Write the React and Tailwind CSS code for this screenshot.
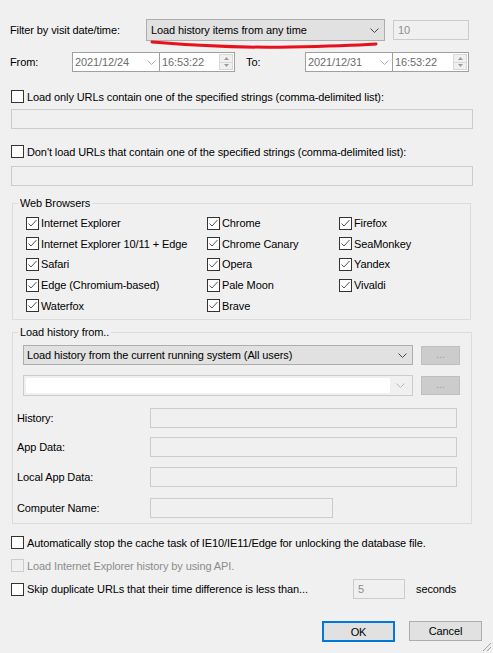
import React from "react";

const font = { fontFamily: '"Liberation Sans", Arial, sans-serif' };

function Check({ checked, disabled }) {
  return (
    <span
      className={
        "flex h-[13px] w-[13px] shrink-0 items-center justify-center border " +
        (disabled ? "border-[#cccccc] bg-[#f0f0f0]" : "border-[#333333] bg-white")
      }
    >
      {checked && (
        <svg width="11" height="11" viewBox="0 0 11 11">
          <polyline points="1.5,5.5 4,8 9.5,2" fill="none" stroke="#555" strokeWidth="1" />
        </svg>
      )}
    </span>
  );
}

function Chevron({ color = "#444" }) {
  return (
    <svg width="9" height="5" viewBox="0 0 9 5">
      <polyline points="0.5,0.5 4.5,4.5 8.5,0.5" fill="none" stroke={color} strokeWidth="1" />
    </svg>
  );
}

function DateBox({ date, w1, w2 }) {
  return (
    <div className="flex h-[20px]">
      <div
        className="flex items-center justify-between border border-[#a0a0a0] bg-white pl-[2px] pr-[3px] text-[#6d6d6d]"
        style={{ width: w1 }}
      >
        <span>{date}</span>
        <Chevron color="#b0b0b0" />
      </div>
      <div
        className="flex items-center justify-between border border-l-0 border-[#a0a0a0] bg-white pl-[2px] pr-[1px] text-[#6d6d6d]"
        style={{ width: w2 }}
      >
        <span>16:53:22</span>
        <div className="flex h-[16px] w-[14px] flex-col border border-[#d9d9d9] bg-[#f0f0f0]">
          <div className="flex flex-1 items-center justify-center border-b border-[#d9d9d9]">
            <svg width="5" height="3" viewBox="0 0 5 3"><polygon points="0,3 2.5,0 5,3" fill="#9a9a9a" /></svg>
          </div>
          <div className="flex flex-1 items-center justify-center">
            <svg width="5" height="3" viewBox="0 0 5 3"><polygon points="0,0 2.5,3 5,0" fill="#9a9a9a" /></svg>
          </div>
        </div>
      </div>
    </div>
  );
}

function Field({ className = "" }) {
  return <div className={"border border-[#cccccc] bg-[#f0f0f0] " + className} />;
}

function DotsButton() {
  return (
    <div className="flex h-[19px] w-[39px] items-center justify-center border border-[#bfbfbf] bg-[#cccccc] pb-[3px] text-[#a0a0a0]">
      ...
    </div>
  );
}

const browsers = [
  ["Internet Explorer", "Chrome", "Firefox"],
  ["Internet Explorer 10/11 + Edge", "Chrome Canary", "SeaMonkey"],
  ["Safari", "Opera", "Yandex"],
  ["Edge (Chromium-based)", "Pale Moon", "Vivaldi"],
  ["Waterfox", "Brave", null],
];

const paths = [
  ["History:", "w-[307px]", "mt-[12px]"],
  ["App Data:", "w-[307px]", "mt-[9px]"],
  ["Local App Data:", "w-[307px]", "mt-[10px]"],
  ["Computer Name:", "w-[183px]", "mt-[11px]"],
];

export default function App() {
  return (
    <div
      className="relative h-[653px] w-[493px] overflow-hidden bg-[#f0f0f0] text-[11px] leading-[14px] tracking-[-0.1px] text-black"
      style={font}
    >
      {/* time filter */}
      <div className="flex h-[22px] items-center mt-[19px]">
        <span className="w-[146px] pl-[10px]">Filter by visit date/time:</span>
        <div className="flex h-[22px] w-[239px] items-center justify-between border border-[#adadad] bg-[#e1e1e1] pl-[4px] pr-[5px]">
          <span>Load history items from any time</span>
          <Chevron />
        </div>
        <div className="ml-[8px] flex h-[20px] w-[76px] items-center border border-[#cccccc] bg-[#f0f0f0] pl-[4px] text-[#8c8c8c]">
          10
        </div>
      </div>
      <svg className="pointer-events-none absolute left-0 top-0" width="493" height="60">
        <path
          d="M152 42 C 200 46, 240 48, 290 47 S 360 45, 376 44"
          fill="none"
          stroke="#e8101c"
          strokeWidth="3"
          strokeLinecap="round"
        />
      </svg>

      <div className="mt-[11px] flex h-[20px] items-center">
        <span className="w-[72px] pl-[10px]">From:</span>
        <DateBox date="2021/12/24" w1={88} w2={75} />
        <span className="ml-[11px] w-[59px]">To:</span>
        <DateBox date="2021/12/31" w1={88} w2={76} />
      </div>

      {/* url filters */}
      <div className="mt-[18px] flex h-[13px] items-center gap-[3px] pl-[11px]">
        <Check />
        <span>Load only URLs contain one of the specified strings (comma-delimited list):</span>
      </div>
      <div className="mt-[6px] pl-[11px]">
        <Field className="h-[20px] w-[462px]" />
      </div>
      <div className="mt-[16px] flex h-[13px] items-center gap-[3px] pl-[11px]">
        <Check />
        <span>Don't load URLs that contain one of the specified strings (comma-delimited list):</span>
      </div>
      <div className="mt-[8px] pl-[11px]">
        <Field className="h-[20px] w-[462px]" />
      </div>

      {/* browsers */}
      <fieldset className="ml-[12px] mt-[10px] h-[124px] w-[459px] border border-[#dcdcdc]">
        <legend className="ml-[5px] px-[2px]">Web Browsers</legend>
        <div className="pl-[13px] pt-[3px]">
          {browsers.map((row, i) => (
            <div key={i} className="flex h-[20.6px] items-center">
              {row.map((name, j) => (
                <div
                  key={j}
                  className={"flex items-center gap-[2px] " + (j === 0 ? "w-[181px]" : j === 1 ? "w-[132px]" : "")}
                >
                  {name && (
                    <>
                      <Check checked />
                      <span>{name}</span>
                    </>
                  )}
                </div>
              ))}
            </div>
          ))}
        </div>
      </fieldset>

      {/* source */}
      <fieldset className="ml-[12px] mt-[5px] h-[199px] w-[460px] border border-[#dcdcdc]">
        <legend className="ml-[5px] px-[2px]">Load history from..</legend>
        <div className="pl-[4px] pt-[6px]">
          <div className="flex items-center pl-[6px]">
            <div className="flex h-[20px] w-[390px] items-center justify-between border border-[#adadad] bg-[#e1e1e1] pl-[3px] pr-[5px]">
              <span>Load history from the current running system (All users)</span>
              <Chevron />
            </div>
            <div className="ml-[8px]">
              <DotsButton />
            </div>
          </div>
          <div className="mt-[10px] flex items-center pl-[6px]">
            <div className="flex h-[21px] w-[390px] items-center border border-[#cccccc] bg-[#f0f0f0] p-[2px]">
              <div className="h-full flex-1 bg-white" />
              <div className="flex w-[20px] justify-center">
                <Chevron color="#b8b8b8" />
              </div>
            </div>
            <div className="ml-[8px]">
              <DotsButton />
            </div>
          </div>
          {paths.map(([label, w, mt]) => (
            <div key={label} className={"flex items-center " + mt}>
              <span className="w-[133px]">{label}</span>
              <Field className={"h-[20px] " + w} />
            </div>
          ))}
        </div>
      </fieldset>

      {/* options */}
      <div className="mt-[12px] flex h-[13px] items-center gap-[3px] pl-[11px]">
        <Check />
        <span>Automatically stop the cache task of IE10/IE11/Edge for unlocking the database file.</span>
      </div>
      <div className="mt-[10px] flex h-[13px] items-center gap-[3px] pl-[11px] text-[#8c8c8c]">
        <Check disabled />
        <span>Load Internet Explorer history by using API.</span>
      </div>
      <div className="mt-[7px] flex h-[20px] items-center pl-[11px]">
        <Check />
        <span className="ml-[3px] w-[326px]">Skip duplicate URLs that their time difference is less than...</span>
        <div className="flex h-[20px] w-[52px] items-center border border-[#cccccc] bg-[#f0f0f0] pl-[4px] text-[#8c8c8c]">
          5
        </div>
        <span className="ml-[11px]">seconds</span>
      </div>

      {/* buttons */}
      <div className="mt-[22px] flex gap-[14px] pl-[322px]">
        <div className="flex h-[21px] w-[73px] items-center justify-center border-2 border-[#0078d7] bg-[#e1e1e1]">
          OK
        </div>
        <div className="flex h-[20px] w-[73px] items-center justify-center border border-[#adadad] bg-[#e1e1e1]">
          Cancel
        </div>
      </div>
      <svg className="absolute bottom-[1px] right-[1px]" width="11" height="11" viewBox="0 0 11 11">
        <path d="M10 2 L2 10 M10 6 L6 10" stroke="#a0a0a0" strokeWidth="1" />
      </svg>
    </div>
  );
}
